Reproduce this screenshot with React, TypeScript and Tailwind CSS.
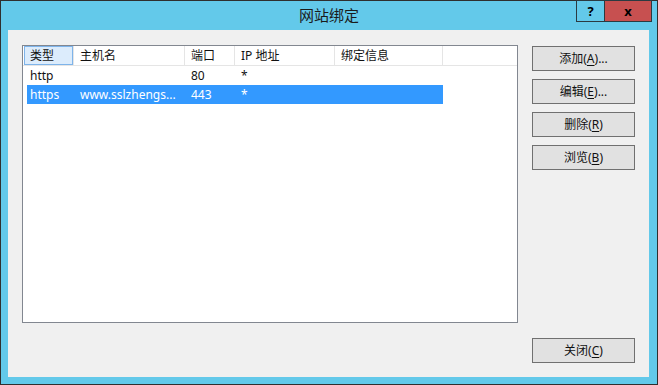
import React from "react";

const FONT = '"Noto Sans", "Noto Sans CJK SC", sans-serif';

const COLS = [
  { key: "type", title: "类型", w: "w-[51px]" },
  { key: "host", title: "主机名", w: "w-[111px]" },
  { key: "port", title: "端口", w: "w-[50px]" },
  { key: "ip", title: "IP 地址", w: "w-[100px]" },
  { key: "info", title: "绑定信息", w: "w-[108px]" },
];

const ROWS = [
  { type: "http", host: "", port: "80", ip: "*", info: "", selected: false },
  { type: "https", host: "www.sslzhengs...", port: "443", ip: "*", info: "", selected: true },
];

function DlgButton({ label, hot, rest }: { label: string; hot: string; rest: string }) {
  return (
    <button className="h-[25px] w-full border border-[#707070] bg-[#e1e1e1] text-[12px] text-[#111] leading-none flex items-center justify-center">
      {label}(<span className="underline underline-offset-2">{hot}</span>){rest}
    </button>
  );
}

export default function App() {
  return (
    <div className="w-[658px] h-[385px] border border-[#2f2f2f] bg-[#63c9ea] flex flex-col" style={{ fontFamily: FONT }}>
      {/* title bar */}
      <div className="relative h-[29px] flex items-center justify-center">
        <span className="text-[15px] text-[#1b1b1b] leading-none">网站绑定</span>
        <div className="absolute -top-px right-[5px] flex">
          <div className="w-[29px] h-[22px] border border-[#2b3a41] flex items-center justify-center text-[13px] font-bold text-black leading-none">?</div>
          <div className="w-[47px] h-[22px] border border-l-0 border-[#2b3a41] bg-[#c75050] flex items-center justify-center text-[13px] font-bold text-black leading-none">x</div>
        </div>
      </div>

      {/* client */}
      <div className="flex-1 ml-[7px] mr-[8px] mb-[7px] bg-[#f0f0f0] flex gap-[14px] pt-[15px] px-[14px] pb-[14px]">
        <div className="w-[496px] h-[278px] border border-[#828790] bg-white text-[12px] text-[#111]">
          <div className="h-[20px] flex border-b border-[#e5e5e5]">
            {COLS.map((c, i) => (
              <div key={c.key} className={`${c.w} h-full flex items-center border-r border-[#e5e5e5] pl-[6px] whitespace-nowrap`}>
                {i === 0 ? (
                  <div className="ml-[-5px] h-full w-[50px] flex items-center border border-[#7eb4ea] bg-[#dcecfc] pl-[5px]">{c.title}</div>
                ) : (
                  c.title
                )}
              </div>
            ))}
          </div>
          {ROWS.map((r) => (
            <div key={r.type} className={`ml-[4px] w-[416px] h-[19px] flex items-center ${r.selected ? "bg-[#3399ff] text-white" : ""}`}>
              <div className="w-[47px] pl-[3px] whitespace-nowrap">{r.type}</div>
              <div className="w-[111px] pl-[6px] whitespace-nowrap overflow-hidden">{r.host}</div>
              <div className="w-[50px] pl-[6px]">{r.port}</div>
              <div className="w-[100px] pl-[6px]">{r.ip}</div>
              <div className="w-[108px] pl-[6px]">{r.info}</div>
            </div>
          ))}
        </div>

        <div className="w-[103px] flex flex-col gap-[8px] pt-px">
          <DlgButton label="添加" hot="A" rest="..." />
          <DlgButton label="编辑" hot="E" rest="..." />
          <DlgButton label="删除" hot="R" rest="" />
          <DlgButton label="浏览" hot="B" rest="" />
          <div className="mt-auto">
            <DlgButton label="关闭" hot="C" rest="" />
          </div>
        </div>
      </div>
    </div>
  );
}
